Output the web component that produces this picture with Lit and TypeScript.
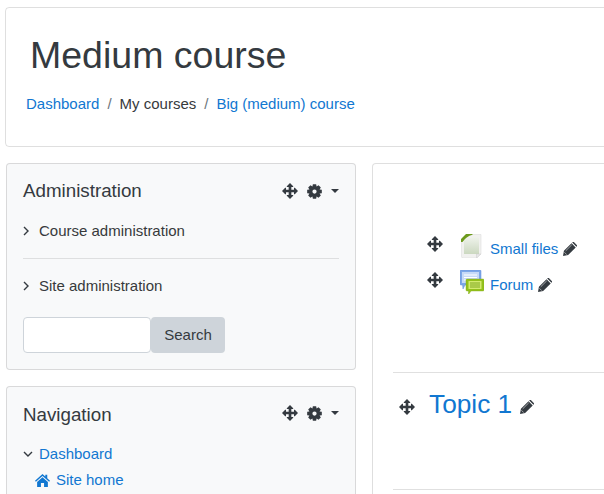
import { LitElement, html, css, svg } from "lit";
import { customElement } from "lit/decorators.js";

const gearPath = (() => {
  const teeth = 8;
  const pts: string[] = [];
  for (let i = 0; i < teeth; i++) {
    const a = (i * Math.PI * 2) / teeth;
    const w = 0.22;
    const ring: [number, number][] = [
      [a - 0.39, 8.8], [a - w, 12], [a + w, 12], [a + 0.39, 8.8],
    ];
    for (const [t, r] of ring) pts.push(`${(12 + r * Math.sin(t)).toFixed(2)} ${(12 - r * Math.cos(t)).toFixed(2)}`);
  }
  return `M${pts.join("L")}Z M12 8.6a3.4 3.4 0 1 0 0 6.8a3.4 3.4 0 1 0 0-6.8Z`;
})();

const move = (cls = "ic") => html`<svg class=${cls} viewBox="0 0 24 24" aria-hidden="true"><path fill="currentColor" d="M12 0 16.8 4.8 16.8 6 14 6 14 10 18 10 18 7.2 19.2 7.2 24 12 19.2 16.8 18 16.8 18 14 14 14 14 18 16.8 18 16.8 19.2 12 24 7.2 19.2 7.2 18 10 18 10 14 6 14 6 16.8 4.8 16.8 0 12 4.8 7.2 6 7.2 6 10 10 10 10 6 7.2 6 7.2 4.8Z"/></svg>`;
const gear = () => html`<svg class="gear" viewBox="0 0 24 24" aria-hidden="true"><path fill="currentColor" fill-rule="evenodd" d=${gearPath}/></svg>`;
const pencil = (cls = "pen") => html`<svg class=${cls} viewBox="0 0 24 24" aria-hidden="true"><path fill="currentColor" d="M0 24 1.6 15.2 14.6 2.2 21.8 9.4 8.8 22.4ZM15.8 1 16.6.2C17.4-.2 18.2-.2 19 .4L23.6 5C24.2 5.8 24.2 6.6 23.8 7.4L23 8.2Z"/><path fill="none" stroke="#f8f8f8" stroke-width="1" d="M4.6 15.2 15 4.8M2.4 17.6 6.4 21.6"/></svg>`;
const chevR = () => html`<svg class="chev" viewBox="0 0 10 10" aria-hidden="true"><path d="M1 1 5 5 1 9" fill="none" stroke="currentColor" stroke-width="1.4"/></svg>`;
const chevD = () => html`<svg class="chev" viewBox="0 0 10 10" aria-hidden="true"><path d="M1 3 5 7 9 3" fill="none" stroke="currentColor" stroke-width="1.4"/></svg>`;
const home = () => html`<svg class="home" viewBox="0 0 24 24" aria-hidden="true"><path fill="currentColor" d="M12 1.5 16.5 5.5V2.8H19.6V8.2L24 12.2 22.6 13.8 12 4.6 1.4 13.8 0 12.2ZM12 6.8 20.6 14.2V22.5H14.5V16H9.5V22.5H3.4V14.2Z"/></svg>`;

const fileIcon = () => html`<svg class="act" viewBox="0 0 24 24" aria-hidden="true">
  ${svg`<defs><linearGradient id="fg" x1="0" y1="0" x2="0" y2="1"><stop offset="0" stop-color="#eef2ea"/><stop offset="1" stop-color="#cbd8c0"/></linearGradient></defs>
  <path d="M1.5 6 7 .5H21V19.5L17 24H3Q1.5 24 1.5 22.5Z" fill="#f1f1ef" stroke="#dedede" stroke-width=".6"/>
  <rect x="4" y="3.5" width="15" height="16.5" fill="url(#fg)"/>
  <path d="M1 8V5L6 0H12.5V.8Q6 2.5 2.5 8Z" fill="#6c9a1c"/>
  <path d="M16.5 24V20H21Z" fill="#e8e8e8" stroke="#c4c4c4" stroke-width=".4"/>`}
</svg>`;
const forumIcon = () => html`<svg class="act" viewBox="0 0 24 24" aria-hidden="true">
  ${svg`<path d="M1 0H20Q21 0 21 1V14Q21 15 20 15H5L3 19 2.6 15H1Q0 15 0 14V1Q0 0 1 0Z" fill="#7da7e8" stroke="#5f8ed8" stroke-width=".5"/>
  <rect x="2" y="2" width="17" height="11" fill="#c7daf7"/>
  <path d="M4 5H17M4 7.5H17M4 10H13" stroke="#fff" stroke-width="1.2"/>
  <path d="M7 9H23Q24 9 24 10V20Q24 21 23 21H11L8.5 24.5 8.5 21H7Q6 21 6 20V10Q6 9 7 9Z" fill="#93c11c" stroke="#7da812" stroke-width=".4"/>
  <rect x="8.5" y="11" width="13" height="8" fill="#d3ea70"/>
  <path d="M10 13H20M10 15H20M10 17H20" stroke="#6c9a10" stroke-width=".8"/>`}
</svg>`;

@customElement("app-root")
export class AppRoot extends LitElement {
  static styles = css`
    :host { display: block; width: 604px; height: 494px; overflow: hidden; background: #fff; color: #373a3c; font-family: "Liberation Sans", Arial, sans-serif; font-size: 15px; line-height: 22.5px; }
    a { color: #1177d1; text-decoration: none; }
    .page { width: 900px; padding: 7px 0 0 5px; box-sizing: border-box; }
    .header { box-sizing: border-box; width: 800px; height: 140px; border: 1px solid rgba(0,0,0,.125); border-radius: 4px; padding: 25px 0 0 20px; }
    h1 { margin: 0 0 0 4px; font-size: 37.5px; font-weight: 400; line-height: 45px; color: #343a40; }
    .crumbs { display: flex; margin-top: 15px; height: 22px; }
    .crumbs .sep { padding: 0 8px; color: #6c757d; }
    .cols { display: flex; align-items: flex-start; margin: 16px 0 0 1px; gap: 16px; }
    .left { width: 350px; display: flex; flex-direction: column; gap: 16px; flex: none; }
    .block { box-sizing: border-box; width: 350px; border: 1px solid rgba(0,0,0,.125); border-radius: 4px; background: #f8f9fa; padding: 16px; }
    .block.admin { height: 207px; }
    .block.nav { height: 120px; }
    .bhead { display: flex; align-items: center; height: 22px; }
    .nav .bhead { margin-top: -1px; }
    h5 { margin: 0; font-size: 18.75px; font-weight: 400; line-height: 22px; flex: 1; color: #343a40; }
    .nav h5 { margin-top: 4px; }
    .ic { width: 16px; height: 16px; color: #343a40; flex: none; display: block; }
    .gear { width: 15px; height: 15px; color: #343a40; margin-left: 9px; display: block; flex: none; }
    .caret { width: 0; height: 0; border: 4px solid transparent; border-top-color: #343a40; border-bottom: 0; margin-left: 9px; flex: none; }
    .tree { display: flex; align-items: center; height: 22px; }
    .chev { width: 10px; height: 10px; margin-right: 6px; flex: none; display: block; color: #343a40; }
    .first { margin-top: 18px; }
    .block hr { border: 0; border-top: 1px solid rgba(0,0,0,.1); margin: 16px 0 16px; }
    .search { display: flex; margin-top: 20px; height: 36px; }
    .input { box-sizing: border-box; width: 128px; height: 36px; border: 1px solid #ced4da; border-radius: 4px; background: #fff; }
    .btn { box-sizing: border-box; width: 74px; height: 36px; border-radius: 4px; background: #ced4da; display: flex; align-items: center; justify-content: center; color: #343a40; }
    .nav .first { margin-top: 17px; height: 26px; }
    .nav .sub { display: flex; align-items: center; height: 26px; padding-left: 12px; }
    .home { width: 15px; height: 15px; color: #1177d1; margin-right: 6px; flex: none; display: block; }
    .main { box-sizing: border-box; width: 500px; height: 400px; flex: none; border: 1px solid rgba(0,0,0,.125); border-bottom: 0; border-radius: 4px 0 0 0; padding: 67px 0 0 20px; }
    .row { display: flex; align-items: flex-start; height: 36px; padding-left: 34px; }
    .row .ic { margin-top: 5px; }
    .act { width: 24px; height: 24px; flex: none; display: block; margin: 3px 6px 0 17px; }
    .row a { margin-top: 7px; }
    .pen { width: 14px; height: 14px; color: #343a40; margin: 11px 0 0 5px; flex: none; display: block; }
    .main hr { border: 0; border-top: 1px solid rgba(0,0,0,.12); margin: 0; width: 400px; }
    .main hr.one { margin-top: 69px; }
    .topic { display: flex; align-items: center; height: 62px; padding-left: 6px; }
    .topic a { font-size: 26.25px; line-height: 32px; margin: 0 0 0 14px; }
    .topic .pen { margin: 5px 0 0 8px; }
    .topic .ic { margin-top: 6px; }
    .main hr.two { margin-top: 54px; }
  `;

  render() {
    return html`<div class="page">
      <header class="header">
        <h1>Medium course</h1>
        <nav class="crumbs"><a href="#">Dashboard</a><span class="sep">/</span><span>My courses</span><span class="sep">/</span><a href="#">Big (medium) course</a></nav>
      </header>
      <div class="cols">
        <div class="left">
          <section class="block admin">
            <div class="bhead"><h5>Administration</h5>${move()}${gear()}<span class="caret"></span></div>
            <div class="tree first">${chevR()}<span>Course administration</span></div>
            <hr />
            <div class="tree">${chevR()}<span>Site administration</span></div>
            <div class="search"><div class="input"></div><div class="btn">Search</div></div>
          </section>
          <section class="block nav">
            <div class="bhead"><h5>Navigation</h5>${move()}${gear()}<span class="caret"></span></div>
            <div class="tree first">${chevD()}<a href="#">Dashboard</a></div>
            <div class="sub">${home()}<a href="#">Site home</a></div>
          </section>
        </div>
        <main class="main">
          <div class="row">${move()}${fileIcon()}<a href="#">Small files</a>${pencil()}</div>
          <div class="row">${move()}${forumIcon()}<a href="#">Forum</a>${pencil()}</div>
          <hr class="one" />
          <div class="topic">${move()}<a href="#">Topic 1</a>${pencil()}</div>
          <hr class="two" />
        </main>
      </div>
    </div>`;
  }
}
